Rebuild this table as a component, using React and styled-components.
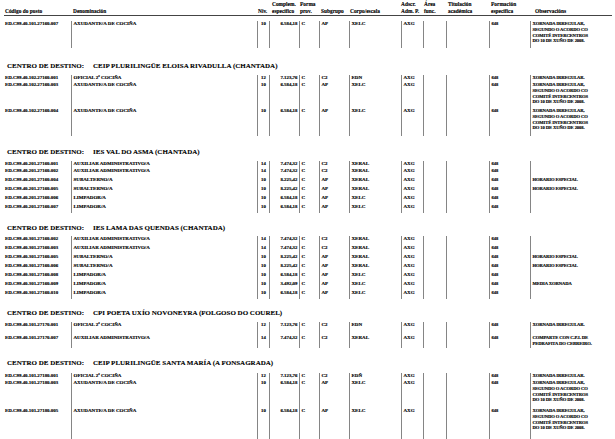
import React from 'react';
import styled, { createGlobalStyle } from 'styled-components';

const GlobalStyle = createGlobalStyle`
    html, body {
        margin: 0;
        padding: 0;
        background: #fff;
        height: 439px;
        overflow: hidden;
    }
    body {
        font-family: 'Liberation Serif', 'Times New Roman', serif;
        color: #000;
    }
`;

const COLUMNS = '67px 186px 12px 30px 20px 30px 52px 22px 23px 43px 41px 82px';

const Page = styled.div`
    padding: 0 3px 0 4px;
    width: 608px;
`;

const HeaderRow = styled.div`
    display: grid;
    grid-template-columns: ${COLUMNS};
    align-items: end;
    padding-top: 1px;
    border-bottom: 1px solid #444;
`;

const HeadCell = styled.div`
    font-size: 5.4px;
    font-weight: bold;
    line-height: 6.8px;
    white-space: pre;
    -webkit-text-stroke: 0.12px #000;
    padding-left: ${p => p.$pad ?? 1}px;
`;

const Block = styled.div`
    margin-top: ${p => p.$top}px;
`;

const Row = styled.div`
    display: grid;
    grid-template-columns: ${COLUMNS};
    min-height: ${p => p.$h}px;
`;

const Cell = styled.div`
    font-size: ${p => p.$size ?? 5}px;
    font-weight: bold;
    line-height: 5.8px;
    padding: 0.5px 1.5px 0 1.5px;
    white-space: pre-line;
    text-align: ${p => p.$align ?? 'left'};
    border-left: ${p => (p.$first ? 'none' : '1px solid #858585')};
    letter-spacing: ${p => p.$spacing ?? 0}px;
    -webkit-text-stroke: 0.15px #000;
    overflow: visible;
`;

const CodeCell = styled(Cell)`
    padding-left: 1px;
    font-size: 4.9px;
`;

const Heading = styled.div`
    margin-top: ${p => p.$top}px;
    padding-left: 3px;
    font-size: 7px;
    font-weight: bold;
    line-height: 9px;
    white-space: nowrap;
    -webkit-text-stroke: 0.1px #000;
`;

const Label = styled.span`
    margin-right: 9px;
`;

const LONG = 'XORNADA IRREGULAR,\nSEGUNDO O ACORDO CO\nCOMITÉ INTERCENTROS\nDO 10 DE XUÑO DE 2008.';
const IRR = 'XORNADA IRREGULAR.';
const HOR = 'HORARIO ESPECIAL';

const aux = (code, obs, h) => [code, 'AXUDANTE/A DE COCIÑA', '10', '6.584,18', 'C', 'AP', 'XELC', obs, h];
const ofi = (code, corpo, obs, h) => [code, 'OFICIAL 2ª COCIÑA', '12', '7.123,76', 'C', 'C2', corpo, obs, h];
const adm = (code, obs, h) => [code, 'AUXILIAR ADMINISTRATIVO/A', '14', '7.474,32', 'C', 'C2', 'XERAL', obs, h];
const sub = (code, obs, h) => [code, 'SUBALTERNO/A', '10', '8.225,42', 'C', 'AP', 'XERAL', obs, h];
const lim = (code, comp, obs, h) => [code, 'LIMPADOR/A', '10', comp, 'C', 'AP', 'XELC', obs, h];

const sections = [
    {
        title: null,
        top: 5,
        rows: [aux('ED.C99.40.101.27160.007', LONG, 27)],
    },
    {
        title: 'CEIP PLURILINGÜE ELOISA RIVADULLA (CHANTADA)',
        top: 14.5,
        after: 3.5,
        rows: [
            ofi('ED.C99.40.102.27160.001', 'EDN', IRR, 7),
            aux('ED.C99.40.102.27160.003', LONG, 26),
            aux('ED.C99.40.102.27160.004', LONG, 28),
        ],
    },
    {
        title: 'IES VAL DO ASMA (CHANTADA)',
        top: 12.5,
        after: 3.5,
        rows: [
            adm('ED.C99.40.201.27160.001', '', 7),
            adm('ED.C99.40.201.27160.002', '', 9),
            sub('ED.C99.40.201.27160.004', HOR, 9),
            sub('ED.C99.40.201.27160.005', HOR, 9),
            lim('ED.C99.40.201.27160.006', '6.584,18', '', 9),
            lim('ED.C99.40.201.27160.007', '6.584,18', '', 9),
        ],
    },
    {
        title: 'IES LAMA DAS QUENDAS (CHANTADA)',
        top: 11.5,
        after: 2.5,
        rows: [
            adm('ED.C99.40.301.27160.002', '', 9),
            adm('ED.C99.40.301.27160.003', '', 9),
            sub('ED.C99.40.301.27160.005', HOR, 9),
            sub('ED.C99.40.301.27160.006', HOR, 9),
            lim('ED.C99.40.301.27160.008', '6.584,18', '', 9),
            lim('ED.C99.40.301.27160.009', '3.492,09', 'MEDIA XORNADA', 9),
            lim('ED.C99.40.301.27160.010', '6.584,18', '', 9),
        ],
    },
    {
        title: 'CPI POETA UXÍO NOVONEYRA (FOLGOSO DO COUREL)',
        top: 10.5,
        after: 3.5,
        rows: [
            ofi('ED.C99.40.101.27170.001', 'EDN', IRR, 13),
            adm('ED.C99.40.101.27170.007', 'COMPARTE CON C.P.I. DE\nPEDRAFITA DO CEBREIRO.', 13),
        ],
    },
    {
        title: 'CEIP PLURILINGÜE SANTA MARÍA (A FONSAGRADA)',
        top: 11.5,
        after: 4.5,
        rows: [
            ofi('ED.C99.40.101.27180.001', 'EDÑ', IRR, 7),
            aux('ED.C99.40.101.27180.003', LONG, 28),
            aux('ED.C99.40.101.27180.005', LONG, 32),
        ],
    },
];

const DataRow = ({ row }) => {
    const [code, denom, niv, comp, forma, subgrupo, corpo, obs, h] = row;
    return (
        <Row $h={h}>
            <CodeCell $first>{code}</CodeCell>
            <Cell $size={5}>{denom}</Cell>
            <Cell $align="center" $size={4.8}>{niv}</Cell>
            <Cell $align="right" $size={4.9}>{comp}</Cell>
            <Cell>{forma}</Cell>
            <Cell>{subgrupo}</Cell>
            <Cell>{corpo}</Cell>
            <Cell>AXG</Cell>
            <Cell />
            <Cell />
            <Cell $size={4.6}>648</Cell>
            <Cell $size={4.6} $spacing={-0.08}>{obs}</Cell>
        </Row>
    );
};

const App = () => (
    <Page>
        <GlobalStyle />
        <HeaderRow>
            <HeadCell>Código do posto</HeadCell>
            <HeadCell $pad={2}>Denominación</HeadCell>
            <HeadCell>Niv.</HeadCell>
            <HeadCell $pad={3}>{'Complem.\nespecífico'}</HeadCell>
            <HeadCell>{'Forma\nprov.'}</HeadCell>
            <HeadCell $pad={2}>Subgrupo</HeadCell>
            <HeadCell $pad={1}>Corpo/escala</HeadCell>
            <HeadCell $pad={0}>{'Adscr.\nAdm. P.'}</HeadCell>
            <HeadCell $pad={1}>{'Área\nfunc.'}</HeadCell>
            <HeadCell $pad={2}>{'Titulación\nacadémica'}</HeadCell>
            <HeadCell $pad={2}>{'Formación\nespecífica'}</HeadCell>
            <HeadCell $pad={5}>Observacións</HeadCell>
        </HeaderRow>
        {sections.map((section, i) => (
            <React.Fragment key={i}>
                {section.title && (
                    <Heading $top={section.top}>
                        <Label>CENTRO DE DESTINO:</Label>
                        {section.title}
                    </Heading>
                )}
                <Block $top={section.title ? section.after : section.top}>
                    {section.rows.map(row => (
                        <DataRow key={row[0]} row={row} />
                    ))}
                </Block>
            </React.Fragment>
        ))}
    </Page>
);

export default App;
